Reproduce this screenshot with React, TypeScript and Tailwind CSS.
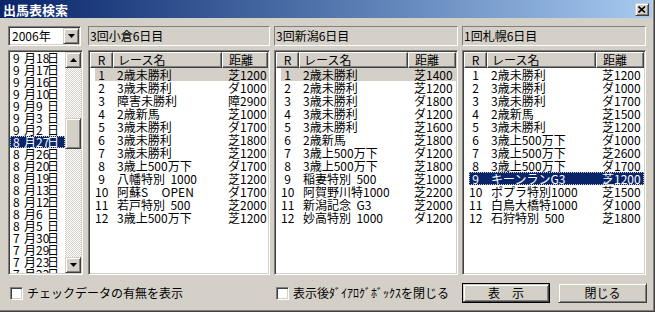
import React from "react";

type Row = { r: number; name: string; dist: string };

const raised =
  "border border-t-[#d4d0c8] border-l-[#d4d0c8] border-r-[#404040] border-b-[#404040] shadow-[inset_1px_1px_#ffffff,inset_-1px_-1px_#808080] bg-[#d4d0c8]";
const sunken =
  "border border-t-[#808080] border-l-[#808080] border-r-white border-b-white shadow-[inset_1px_1px_#404040,inset_-1px_-1px_#d4d0c8]";
const hdr =
  "border border-t-white border-l-white border-r-[#404040] border-b-[#404040] shadow-[inset_-1px_-1px_#808080] bg-[#d4d0c8] h-[16px] leading-[14px]";
const checker =
  "bg-[image:repeating-conic-gradient(#ffffff_0_25%,#d4d0c8_0_50%)] bg-[length:2px_2px]";

const kokura: Row[] = [
  { r: 1, name: "2歳未勝利", dist: "芝1200" },
  { r: 2, name: "3歳未勝利", dist: "ダ1000" },
  { r: 3, name: "障害未勝利", dist: "障2900" },
  { r: 4, name: "2歳新馬", dist: "芝1000" },
  { r: 5, name: "3歳未勝利", dist: "ダ1700" },
  { r: 6, name: "3歳未勝利", dist: "芝1800" },
  { r: 7, name: "3歳未勝利", dist: "芝1200" },
  { r: 8, name: "3歳上500万下", dist: "ダ1700" },
  { r: 9, name: "八幡特別  1000", dist: "芝1200" },
  { r: 10, name: "阿蘇S     OPEN", dist: "ダ1700" },
  { r: 11, name: "若戸特別  500", dist: "芝2000" },
  { r: 12, name: "3歳上500万下", dist: "芝1200" },
];

const niigata: Row[] = [
  { r: 1, name: "2歳未勝利", dist: "芝1400" },
  { r: 2, name: "2歳未勝利", dist: "芝1200" },
  { r: 3, name: "3歳未勝利", dist: "ダ1800" },
  { r: 4, name: "3歳未勝利", dist: "ダ1200" },
  { r: 5, name: "3歳未勝利", dist: "芝1600" },
  { r: 6, name: "2歳新馬", dist: "芝1800" },
  { r: 7, name: "3歳上500万下", dist: "ダ1200" },
  { r: 8, name: "3歳上500万下", dist: "芝1800" },
  { r: 9, name: "稲妻特別  500", dist: "芝1000" },
  { r: 10, name: "阿賀野川特1000", dist: "芝2200" },
  { r: 11, name: "新潟記念  G3", dist: "芝2000" },
  { r: 12, name: "妙高特別  1000", dist: "ダ1200" },
];

const sapporo: Row[] = [
  { r: 1, name: "2歳未勝利", dist: "芝1200" },
  { r: 2, name: "3歳未勝利", dist: "ダ1000" },
  { r: 3, name: "3歳未勝利", dist: "ダ1700" },
  { r: 4, name: "2歳新馬", dist: "芝1500" },
  { r: 5, name: "3歳未勝利", dist: "芝1200" },
  { r: 6, name: "3歳上500万下", dist: "ダ1000" },
  { r: 7, name: "3歳上500万下", dist: "芝2600" },
  { r: 8, name: "3歳上500万下", dist: "ダ1700" },
  { r: 9, name: "キーンランG3", dist: "芝1200" },
  { r: 10, name: "ポプラ特別1000", dist: "芝1500" },
  { r: 11, name: "白鳥大橋特1000", dist: "ダ1000" },
  { r: 12, name: "石狩特別  500", dist: "芝1800" },
];

const dates: [number, number][] = [
  [9, 18], [9, 17], [9, 16], [9, 10], [9, 9], [9, 3], [9, 2],
  [8, 27], [8, 26], [8, 20], [8, 19], [8, 13], [8, 12], [8, 6], [8, 5],
  [7, 30], [7, 29], [7, 23], [7, 22],
];

function Tri({ up }: { up?: boolean }) {
  return (
    <svg width="7" height="4" viewBox="0 0 7 4" className="block">
      {up ? <path d="M3.5 0 L7 4 L0 4 Z" fill="#000" /> : <path d="M0 0 L7 0 L3.5 4 Z" fill="#000" />}
    </svg>
  );
}

function Panel({
  title,
  rows,
  hi,
  sel,
  widthClass,
}: {
  title: string;
  rows: Row[];
  hi: number;
  sel: number;
  widthClass: string;
}) {
  return (
    <div className={`flex flex-col gap-[4px] ${widthClass}`}>
      <div className="h-[20px] border border-t-[#808080] border-l-[#808080] border-r-white border-b-white flex items-center pl-[1px] leading-none">
        {title}
      </div>
      <div className={`${sunken} h-[225px] bg-white flex flex-col overflow-hidden p-[1px]`}>
        <div className="flex shrink-0">
          <div className={`${hdr} w-[23px] text-center`}>R</div>
          <div className={`${hdr} w-[109px] pl-[4px]`}>レース名</div>
          <div className={`${hdr} flex-1 pl-[6px]`}>距離</div>
        </div>
        {rows.map((row, i) => {
          const isSel = i === sel;
          const isHi = i === hi;
          const bg = isSel
            ? "bg-[#0a246a] text-white outline outline-1 outline-dotted outline-[#c8c8c8] -outline-offset-1"
            : isHi
            ? "bg-[#d4d0c8]"
            : "";
          return (
            <div key={row.r} className="flex h-[13px] leading-[13px] shrink-0">
              <div className={`flex flex-1 ml-[5px] ${bg}`}>
                <div className="w-[18px] pr-[5px] text-center">{row.r}</div>
                <div className="w-[109px] pl-[4px] whitespace-pre">{row.name}</div>
                <div className="flex-1 pl-[6px]">{row.dist}</div>
              </div>
            </div>
          );
        })}
      </div>
    </div>
  );
}

function Check({ label }: { label: string }) {
  return (
    <div className="flex items-center gap-[4px]">
      <div className={`${sunken} w-[13px] h-[13px] bg-white`} />
      <span className="leading-none whitespace-pre">{label}</span>
    </div>
  );
}

export default function App() {
  return (
    <div className="w-[655px] h-[312px] bg-[#d4d0c8] flex flex-col overflow-hidden border-r border-b border-r-[#404040] border-b-[#404040] shadow-[inset_-1px_-1px_#808080] font-['Noto_Sans_CJK_JP','Noto_Sans_CJK_SC',sans-serif] text-[12px] text-black">
      {/* title bar */}
      <div className="h-[18px] shrink-0 mr-[2px] bg-gradient-to-r from-[#0a246a] to-[#a6caf0] flex items-center pl-[3px] pr-[3px]">
        <span className="text-white font-bold text-[13px] leading-none">出馬表検索</span>
        <div className={`${raised} ml-auto w-[14px] h-[13px] flex items-center justify-center`}>
          <svg width="8" height="7" viewBox="0 0 8 7" className="block">
            <path d="M0.5 0.5 L7 6.5 M7 0.5 L0.5 6.5" stroke="#000" strokeWidth="1.6" />
          </svg>
        </div>
      </div>

      {/* main area */}
      <div className="flex pl-[8px] pt-[8px] items-start">
        {/* left column */}
        <div className="flex flex-col gap-[4px] w-[75px] shrink-0">
          <div className={`${sunken} w-[73px] h-[20px] bg-white flex items-center p-[1px]`}>
            <span className="flex-1 pl-[2px] leading-none">2006年</span>
            <div className={`${raised} w-[16px] h-[16px] flex items-center justify-center`}>
              <Tri />
            </div>
          </div>
          <div className={`${sunken} h-[225px] bg-white flex p-[1px] overflow-hidden`}>
            <div className="flex-1 flex flex-col overflow-hidden">
              {dates.map(([m, d], i) => (
                <div
                  key={i}
                  className={`h-[12px] leading-[12px] shrink-0 pl-[3px] whitespace-pre ${
                    i === 7
                      ? "bg-[#0a246a] text-white outline outline-1 outline-dotted outline-[#c8c8c8] -outline-offset-1"
                      : ""
                  }`}
                >
                  <span className="inline-block w-[11px]">{m}</span>月
                  <span className="inline-block w-[11px]">{d}</span>日
                </div>
              ))}
            </div>
            <div className="w-[16px] flex flex-col shrink-0">
              <div className={`${raised} h-[16px] flex items-center justify-center shrink-0`}>
                <Tri up />
              </div>
              <div className={`${checker} h-[50px] shrink-0`} />
              <div className={`${raised} h-[31px] shrink-0`} />
              <div className={`${checker} flex-1`} />
              <div className={`${raised} h-[16px] flex items-center justify-center shrink-0`}>
                <Tri />
              </div>
            </div>
          </div>
        </div>

        <div className="flex ml-[5px] gap-[4px]">
          <Panel title="3回小倉6日目" rows={kokura} hi={0} sel={-1} widthClass="w-[182px]" />
          <Panel title="3回新潟6日目" rows={niigata} hi={0} sel={-1} widthClass="w-[184px]" />
          <Panel title="1回札幌6日目" rows={sapporo} hi={-1} sel={8} widthClass="w-[184px]" />
        </div>
      </div>

      {/* bottom row */}
      <div className="flex items-center pt-[8px] pl-[10px] h-[28px] shrink-0">
        <div className="w-[266px]">
          <Check label="チェックデータの有無を表示" />
        </div>
        <div className="w-[186px]">
          <Check label="表示後ﾀﾞｲｱﾛｸﾞﾎﾞｯｸｽを閉じる" />
        </div>
        <div className="border border-black w-[88px] h-[20px]">
          <div className={`${raised} w-full h-full flex items-center justify-center leading-none`}>表　示</div>
        </div>
        <div className={`${raised} ml-[8px] w-[89px] h-[20px] flex items-center justify-center leading-none`}>
          閉じる
        </div>
      </div>
    </div>
  );
}
